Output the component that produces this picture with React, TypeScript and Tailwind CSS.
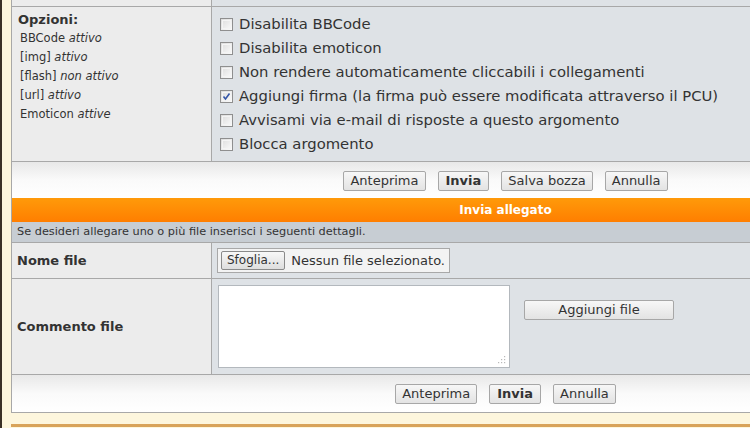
import React from "react";

const font = { fontFamily: '"DejaVu Sans", Verdana, sans-serif' };

function Box({ checked }: { checked?: boolean }) {
  return (
    <span className="relative inline-block w-[13px] h-[13px] border border-[#8f8f8f] bg-gradient-to-br from-[#dcdcdc] to-[#fbfbfb] mr-[6px] shrink-0">
      <span className="absolute inset-[1px] border border-[#f4f4f4]" />
      {checked && (
        <svg className="absolute inset-0" width="11" height="11" viewBox="0 0 11 11">
          <path d="M2.5 5.5 L4.5 8 L8.5 2.5" stroke="#3556a8" strokeWidth="1.6" fill="none" />
        </svg>
      )}
    </span>
  );
}

function Btn({ children, bold, w }: { children: React.ReactNode; bold?: boolean; w?: string }) {
  return (
    <button
      className={`h-[20px] px-[6px] border border-[#a7a7a7] rounded-[2px] bg-gradient-to-b from-[#f7f7f7] to-[#e3e3e3] text-[13px] leading-[18px] text-[#333] ${bold ? "font-bold px-[7px]" : ""} ${w ?? ""}`}
      style={font}
    >
      {children}
    </button>
  );
}

const opts = [
  ["Disabilita BBCode", false],
  ["Disabilita emoticon", false],
  ["Non rendere automaticamente cliccabili i collegamenti", false],
  ["Aggiungi firma (la firma può essere modificata attraverso il PCU)", true],
  ["Avvisami via e-mail di risposte a questo argomento", false],
  ["Blocca argomento", false],
] as const;

export default function App() {
  return (
    <div className="w-[750px] h-[428px] overflow-hidden bg-[#fdf6dd] flex text-[#333]" style={font}>
      <div className="w-[2px] h-full bg-[#3a3126] shrink-0" />
      <div className="ml-[9px] shrink-0 flex flex-col">
        <div className="w-[989px] border-l border-r border-b border-[#a8a8a8] flex flex-col">
          {/* top stub */}
          <div className="flex h-[7px] border-b border-[#a8a8a8]">
            <div className="w-[200px] bg-[#ececec] border-r border-[#a8a8a8]" />
            <div className="flex-1 bg-[#dee2e6]" />
          </div>
          {/* options */}
          <div className="flex h-[155px] border-b border-[#a8a8a8]">
            <div className="w-[200px] bg-[#ececec] border-r border-[#a8a8a8] pl-[6px] pt-[3px]">
              <div className="text-[13px] font-bold leading-[19px]">Opzioni:</div>
              <div className="text-[11.5px] leading-[19px] pl-[2px]">
                <div>BBCode <i>attivo</i></div>
                <div>[img] <i>attivo</i></div>
                <div>[flash] <i>non attivo</i></div>
                <div>[url] <i>attivo</i></div>
                <div>Emoticon <i>attive</i></div>
              </div>
            </div>
            <div className="flex-1 bg-[#dee2e6] pl-[8px] pt-[5px]">
              {opts.map(([t, c]) => (
                <div key={t} className="flex items-center h-[24px] text-[14.8px]">
                  <Box checked={c} />
                  <span>{t}</span>
                </div>
              ))}
            </div>
          </div>
          {/* buttons */}
          <div className="h-[36px] bg-gradient-to-b from-[#e8e8e8] via-[#fafafa] to-white flex items-center justify-center gap-[12px] pt-[1px]">
            <Btn>Anteprima</Btn>
            <Btn bold>Invia</Btn>
            <Btn>Salva bozza</Btn>
            <Btn>Annulla</Btn>
          </div>
          {/* orange header */}
          <div className="h-[24px] bg-gradient-to-b from-[#ff9a0a] to-[#ff7e00] flex items-center justify-center text-white font-bold text-[12px]">
            Invia allegato
          </div>
          {/* info */}
          <div className="h-[21px] bg-[#c7cdd3] border-b border-[#a8a8a8] flex items-center pl-[5px] text-[11.3px]">
            Se desideri allegare uno o più file inserisci i seguenti dettagli.
          </div>
          {/* Nome file */}
          <div className="flex h-[36px] border-b border-[#a8a8a8]">
            <div className="w-[200px] bg-[#ececec] border-r border-[#a8a8a8] pl-[5px] flex items-center font-bold text-[13px]">
              Nome file
            </div>
            <div className="flex-1 bg-[#dee2e6] flex items-center pl-[5px]">
              <div className="h-[25px] flex items-center border border-[#a8a8a8] bg-[#f3f3f3] pl-[3px] pr-[4px] text-[13px]">
                <span className="h-[19px] px-[5px] border border-[#8a8a8a] rounded-[2px] bg-gradient-to-b from-[#f8f8f8] to-[#dedede] text-[12px] leading-[17px] mr-[6px]">
                  Sfoglia...
                </span>
                Nessun file selezionato.
              </div>
            </div>
          </div>
          {/* Commento file */}
          <div className="flex h-[96px] border-b border-[#a8a8a8]">
            <div className="w-[200px] bg-[#ececec] border-r border-[#a8a8a8] pl-[5px] flex items-center font-bold text-[13px]">
              Commento file
            </div>
            <div className="flex-1 bg-[#dee2e6] flex items-start pl-[6px] pt-[6px]">
              <div className="relative w-[292px] h-[83px] bg-white border border-[#b3b8bd]">
                <svg className="absolute right-[3px] bottom-[3px]" width="9" height="9" viewBox="0 0 9 9">
                  <g fill="#b9b9b9">
                    <rect x="7" y="1" width="1.2" height="1.2" />
                    <rect x="4" y="4" width="1.2" height="1.2" />
                    <rect x="7" y="4" width="1.2" height="1.2" />
                    <rect x="1" y="7" width="1.2" height="1.2" />
                    <rect x="4" y="7" width="1.2" height="1.2" />
                    <rect x="7" y="7" width="1.2" height="1.2" />
                  </g>
                </svg>
              </div>
              <div className="ml-[14px] mt-[12px]">
                <Btn w="w-[150px]">Aggiungi file</Btn>
              </div>
            </div>
          </div>
          {/* buttons bottom */}
          <div className="h-[37px] bg-gradient-to-b from-[#e8e8e8] via-[#fafafa] to-white flex items-center justify-center gap-[12px]">
            <Btn>Anteprima</Btn>
            <Btn bold>Invia</Btn>
            <Btn>Annulla</Btn>
          </div>
        </div>
        <div className="h-[11px]" />
        <div className="h-[3px] w-[989px] bg-[#d8a35a]" />
      </div>
    </div>
  );
}
